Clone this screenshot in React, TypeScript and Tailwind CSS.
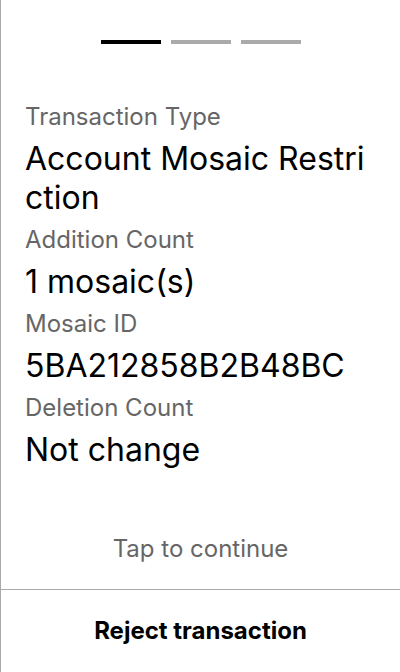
const fields = [
  { label: 'Transaction Type', value: 'Account Mosaic Restriction' },
  { label: 'Addition Count', value: '1 mosaic(s)' },
  { label: 'Mosaic ID', value: '5BA212858B2B48BC' },
  { label: 'Deletion Count', value: 'Not change' },
];

export default function App() {
  return (
    <div
      className="flex h-[672px] w-[400px] flex-col border-l border-[#aaaaaa] bg-white"
      style={{ fontFamily: 'Inter, "Noto Sans", sans-serif' }}
    >
      <div className="flex justify-center gap-[10px] pt-[40px]">
        <div className="h-[4px] w-[60px] bg-black" />
        <div className="h-[4px] w-[60px] bg-[#aaaaaa]" />
        <div className="h-[4px] w-[60px] bg-[#aaaaaa]" />
      </div>
      <div className="flex flex-1 flex-col gap-[8px] px-[24px] pt-[58px]">
        {fields.map((f) => (
          <div key={f.label} className="flex flex-col gap-[8px]">
            <p className="text-[24px] leading-[29px] text-[#666666]">{f.label}</p>
            <p className="break-all text-[32px] leading-[39px] text-black">{f.value}</p>
          </div>
        ))}
      </div>
      <p className="pb-[26px] text-center text-[24px] leading-[29px] text-[#666666]">
        Tap to continue
      </p>
      <button className="h-[83px] border-t border-[#aaaaaa] text-[24px] font-bold text-black">
        Reject transaction
      </button>
    </div>
  );
}
